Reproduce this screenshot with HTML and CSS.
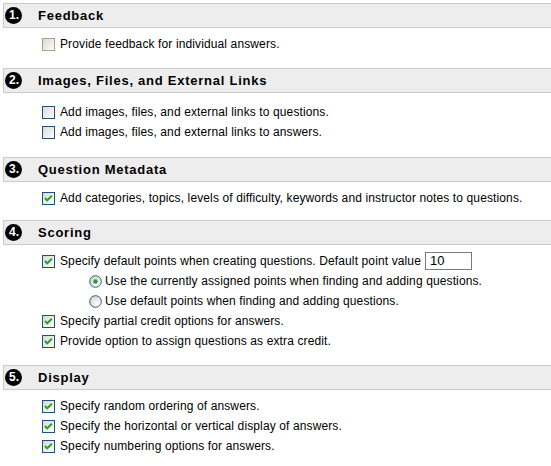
FILE: index.html
```html
<!DOCTYPE html>
<html>
<head>
<meta charset="utf-8">
<link rel="stylesheet" href="styles.css">
</head>
<body>
<svg width="0" height="0" class="defs">
  <defs>
    <linearGradient id="cbg" x1="0" y1="0" x2="1" y2="1">
      <stop offset="0" stop-color="#d8d8d2"/>
      <stop offset="1" stop-color="#ffffff"/>
    </linearGradient>
    <radialGradient id="rbg" cx="0.7" cy="0.7" r="0.8">
      <stop offset="0" stop-color="#ffffff"/>
      <stop offset="1" stop-color="#d4d4cf"/>
    </radialGradient>
  </defs>
</svg>

<div class="section">
  <div class="head"><span class="num">1.</span><span class="title">Feedback</span></div>
  <div class="rows">
    <div class="row"><svg class="cb" width="13" height="13" viewBox="0 0 13 13"><rect x="0.5" y="0.5" width="12" height="12" fill="url(#cbg)" stroke="#1c5180" stroke-opacity="0.35"/><rect x="0.5" y="0.5" width="12" height="12" fill="none" stroke="#c07a2c" stroke-dasharray="1 1"/></svg><span>Provide feedback for individual answers.</span></div>
  </div>
</div>

<div class="section">
  <div class="head"><span class="num">2.</span><span class="title">Images, Files, and External Links</span></div>
  <div class="rows rows-loose">
    <div class="row"><svg class="cb" width="13" height="13" viewBox="0 0 13 13"><rect x="0.5" y="0.5" width="12" height="12" fill="url(#cbg)" stroke="#1c5180"/></svg><span>Add images, files, and external links to questions.</span></div>
    <div class="row"><svg class="cb" width="13" height="13" viewBox="0 0 13 13"><rect x="0.5" y="0.5" width="12" height="12" fill="url(#cbg)" stroke="#1c5180"/></svg><span>Add images, files, and external links to answers.</span></div>
  </div>
</div>

<div class="section">
  <div class="head"><span class="num">3.</span><span class="title">Question Metadata</span></div>
  <div class="rows rows-tight">
    <div class="row"><svg class="cb" width="13" height="13" viewBox="0 0 13 13"><rect x="0.5" y="0.5" width="12" height="12" fill="url(#cbg)" stroke="#1c5180"/><path d="M3 6 L5.2 8.4 L9.8 3.8" fill="none" stroke="#21a121" stroke-width="2"/></svg><span>Add categories, topics, levels of difficulty, keywords and instructor notes to questions.</span></div>
  </div>
</div>

<div class="section">
  <div class="head"><span class="num">4.</span><span class="title">Scoring</span></div>
  <div class="rows">
    <div class="row"><svg class="cb" width="13" height="13" viewBox="0 0 13 13"><rect x="0.5" y="0.5" width="12" height="12" fill="url(#cbg)" stroke="#1c5180"/><path d="M3 6 L5.2 8.4 L9.8 3.8" fill="none" stroke="#21a121" stroke-width="2"/></svg><span>Specify default points when creating questions. Default point value</span><span class="input">10</span></div>
    <div class="row sub"><svg class="rd" width="13" height="13" viewBox="0 0 13 13"><circle cx="6.5" cy="6.5" r="5.8" fill="url(#rbg)" stroke="#2f5f8a" stroke-width="1"/><circle cx="6.5" cy="6.5" r="2.2" fill="#21a121"/></svg><span>Use the currently assigned points when finding and adding questions.</span></div>
    <div class="row sub"><svg class="rd" width="13" height="13" viewBox="0 0 13 13"><circle cx="6.5" cy="6.5" r="5.8" fill="url(#rbg)" stroke="#2f5f8a" stroke-width="1"/></svg><span>Use default points when finding and adding questions.</span></div>
    <div class="row"><svg class="cb" width="13" height="13" viewBox="0 0 13 13"><rect x="0.5" y="0.5" width="12" height="12" fill="url(#cbg)" stroke="#1c5180"/><path d="M3 6 L5.2 8.4 L9.8 3.8" fill="none" stroke="#21a121" stroke-width="2"/></svg><span>Specify partial credit options for answers.</span></div>
    <div class="row"><svg class="cb" width="13" height="13" viewBox="0 0 13 13"><rect x="0.5" y="0.5" width="12" height="12" fill="url(#cbg)" stroke="#1c5180"/><path d="M3 6 L5.2 8.4 L9.8 3.8" fill="none" stroke="#21a121" stroke-width="2"/></svg><span>Provide option to assign questions as extra credit.</span></div>
  </div>
</div>

<div class="section">
  <div class="head"><span class="num">5.</span><span class="title">Display</span></div>
  <div class="rows">
    <div class="row"><svg class="cb" width="13" height="13" viewBox="0 0 13 13"><rect x="0.5" y="0.5" width="12" height="12" fill="url(#cbg)" stroke="#1c5180"/><path d="M3 6 L5.2 8.4 L9.8 3.8" fill="none" stroke="#21a121" stroke-width="2"/></svg><span>Specify random ordering of answers.</span></div>
    <div class="row"><svg class="cb" width="13" height="13" viewBox="0 0 13 13"><rect x="0.5" y="0.5" width="12" height="12" fill="url(#cbg)" stroke="#1c5180"/><path d="M3 6 L5.2 8.4 L9.8 3.8" fill="none" stroke="#21a121" stroke-width="2"/></svg><span>Specify the horizontal or vertical display of answers.</span></div>
    <div class="row"><svg class="cb" width="13" height="13" viewBox="0 0 13 13"><rect x="0.5" y="0.5" width="12" height="12" fill="url(#cbg)" stroke="#1c5180"/><path d="M3 6 L5.2 8.4 L9.8 3.8" fill="none" stroke="#21a121" stroke-width="2"/></svg><span>Specify numbering options for answers.</span></div>
  </div>
</div>
</body>
</html>
```

FILE: styles.css
```css
html, body {
  margin: 0;
  padding: 0;
  background: #ffffff;
}
body {
  padding: 3px 0 0 3px;
  font-family: "Liberation Sans", Arial, sans-serif;
  font-size: 12px;
  letter-spacing: 0.12px;
  color: #000;
  overflow: hidden;
}
.defs {
  position: absolute;
  width: 0;
  height: 0;
}
.head {
  height: 23px;
  border-top: 1px solid #cbcbcb;
  border-bottom: 1px solid #cbcbcb;
  border-left: 1px solid #cbcbcb;
  background: #ededed;
  display: flex;
  align-items: center;
}
.num {
  width: 17px;
  height: 17px;
  border-radius: 50%;
  background: #000;
  color: #fff;
  font-weight: bold;
  font-size: 12px;
  line-height: 17px;
  text-align: center;
  margin-left: 1px;
  letter-spacing: 0;
  text-indent: 1px;
}
.title {
  margin-left: 16px;
  font-weight: bold;
  font-size: 13px;
  letter-spacing: 0.75px;
}
.rows {
  padding: 6px 0 14px 39px;
}
.rows-loose {
  padding-top: 9px;
  padding-bottom: 15px;
}
.rows-tight {
  padding-bottom: 12px;
}
.row {
  height: 20px;
  display: flex;
  align-items: center;
}
.row.sub {
  padding-left: 47px;
}
.cb, .rd {
  flex: none;
  margin-right: 5px;
}
.rd {
  margin-right: 3px;
}
.input {
  margin-left: 4px;
  width: 41px;
  height: 16px;
  border: 1px solid #7a7a7a;
  padding: 0 0 0 4px;
  line-height: 16px;
  font-size: 13px;
}
```
